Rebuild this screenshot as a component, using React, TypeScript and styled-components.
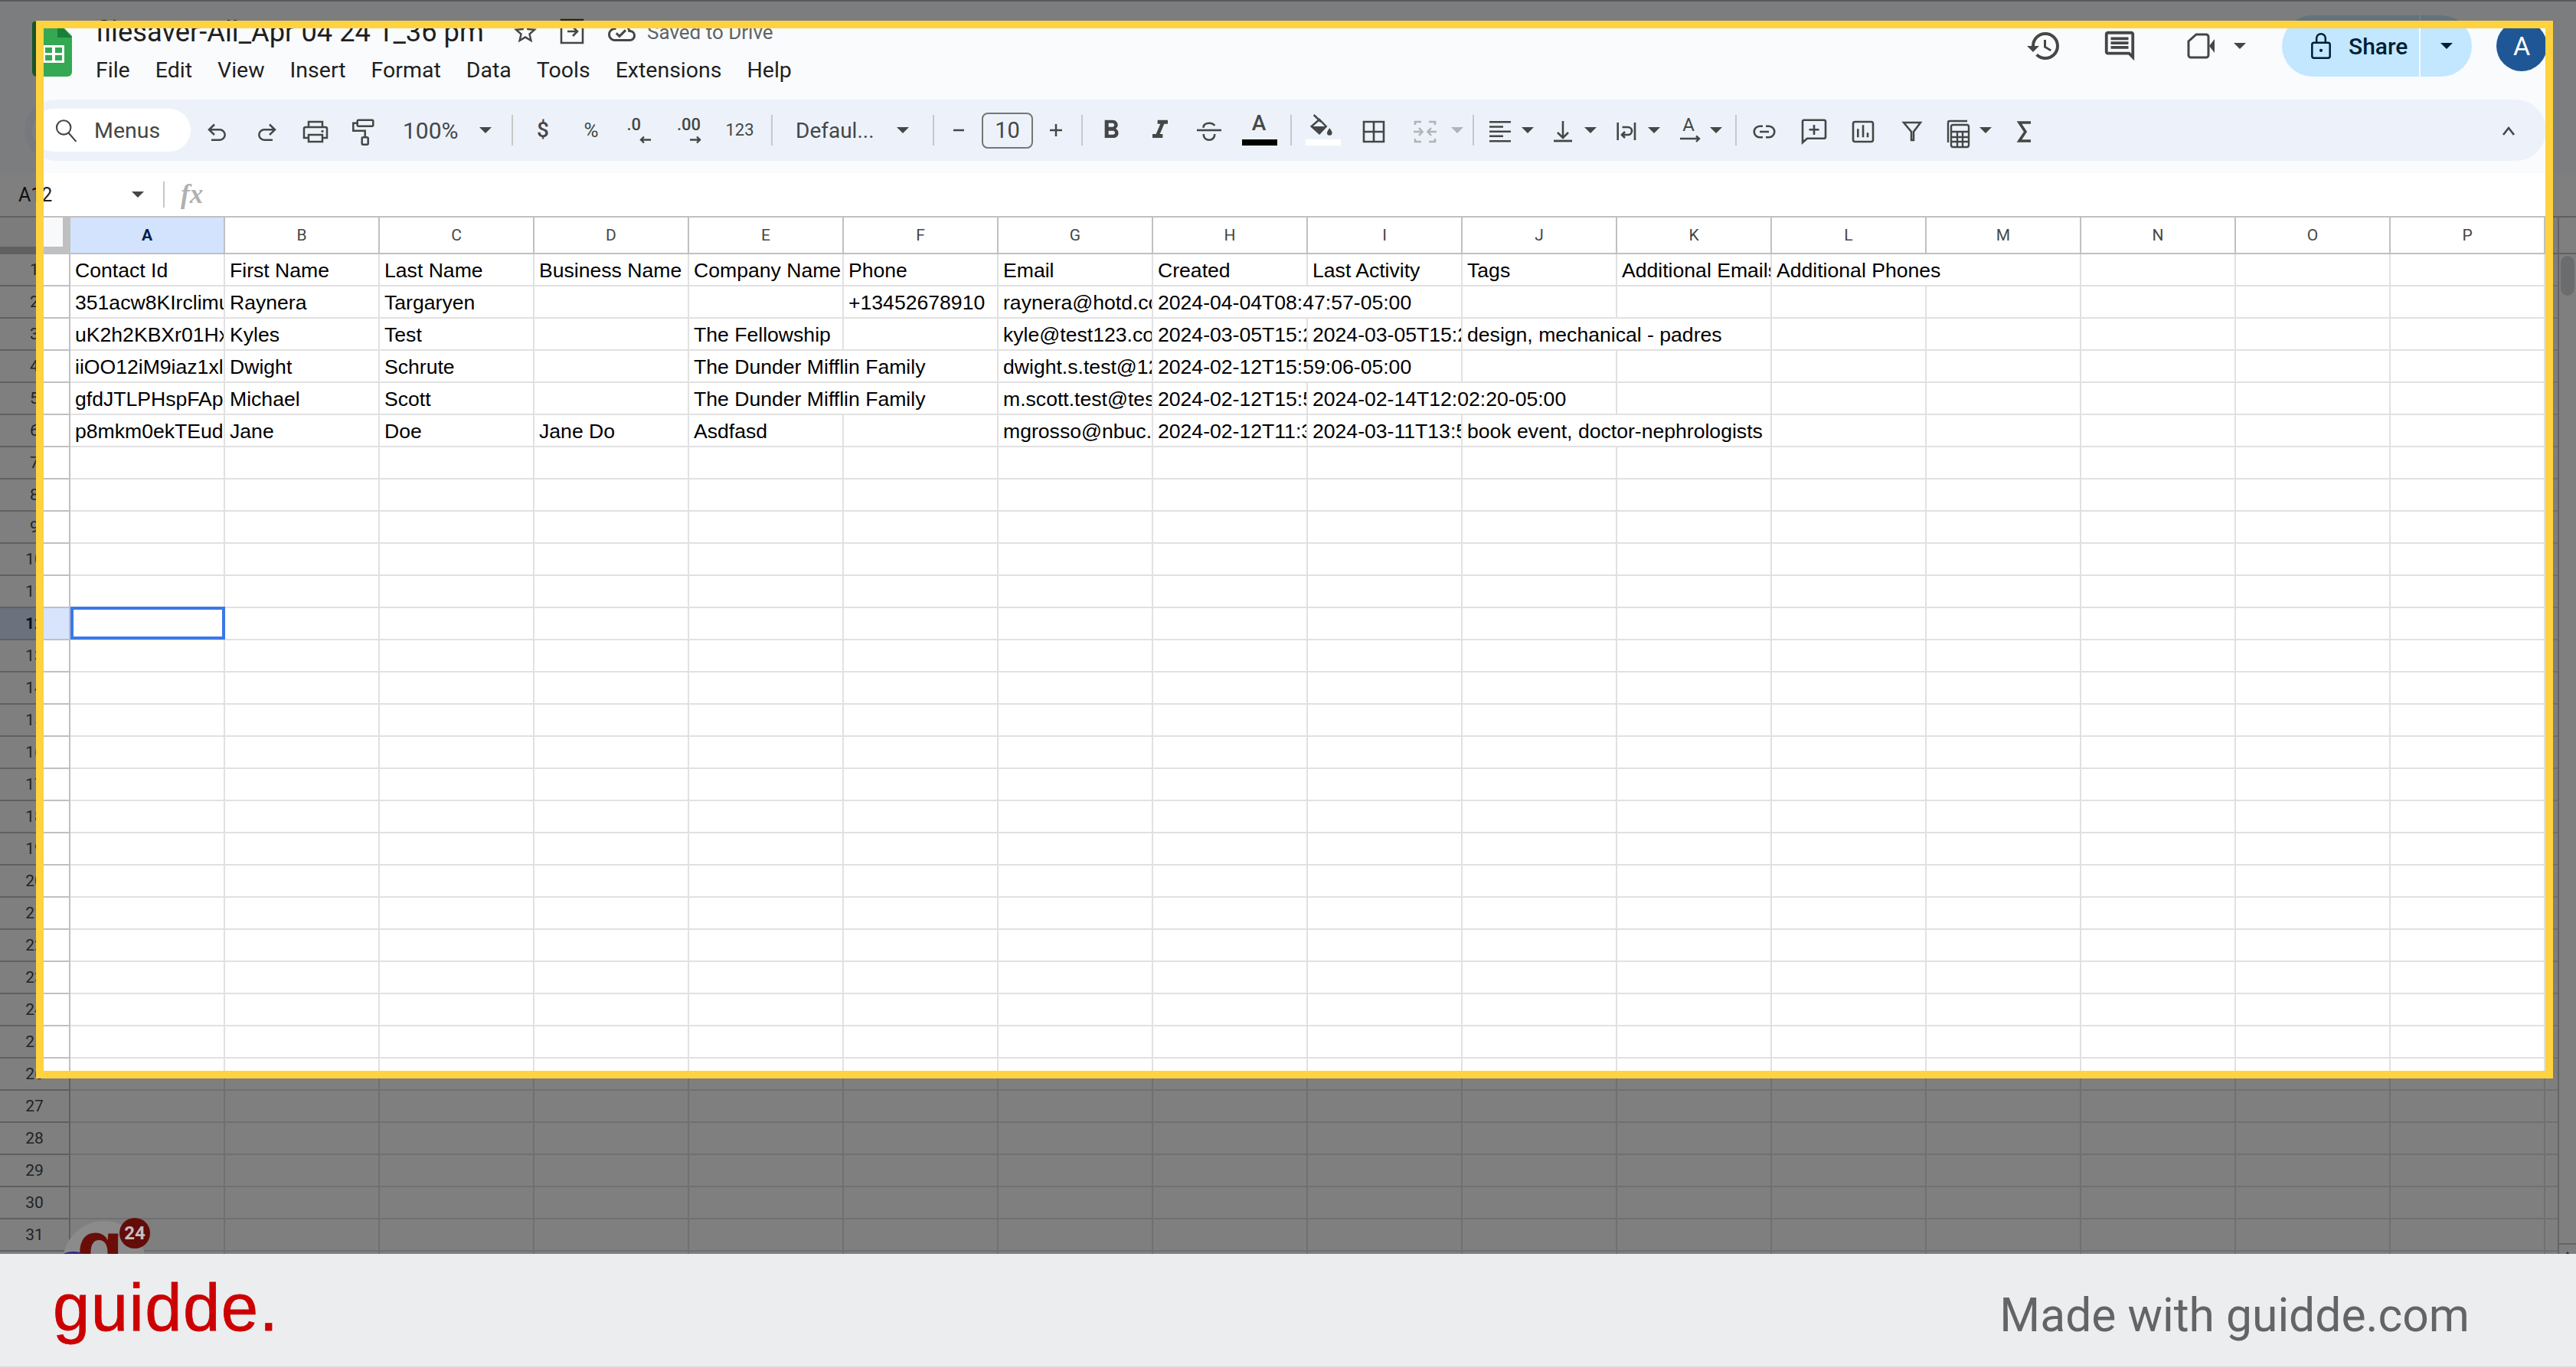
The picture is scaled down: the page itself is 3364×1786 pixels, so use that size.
import React from "react";
import styled, { createGlobalStyle } from "styled-components";
import { MdFormatBold, MdFormatItalic, MdHistory, MdOutlineComment, MdStarBorder, MdOutlineCloudDone } from "react-icons/md";

const Global = createGlobalStyle`
  html, body { margin: 0; padding: 0; overflow: hidden; background: #fff; }
  * { box-sizing: border-box; }
`;

const INK = "#444746";
const UI = `Roboto, "Liberation Sans", sans-serif`;

const Page = styled.div`
  position: relative;
  width: 3364px;
  height: 1786px;
  overflow: hidden;
  font-family: ${UI};
`;
const Sheet = styled.div`
  position: relative;
  height: 1637px;
  overflow: hidden;
  background: #fff;
  display: flex;
  flex-direction: column;
`;
const Chrome = styled.header`
  height: 226px;
  background: #f9fbfd;
  border-top: 2px solid #b4b4b4;
  flex: none;
`;
const TopBar = styled.div`
  display: flex;
  height: 128px;
  padding: 0 38px 0 42px;
`;
const Logo = styled.svg`
  width: 52px;
  height: 72px;
  margin-top: 26px;
  flex: none;
`;
const TitleColumn = styled.div`
  margin-left: 31px;
  display: flex;
  flex-direction: column;
`;
const TitleRow = styled.div`
  display: flex;
  align-items: center;
  height: 40px;
  margin-top: 20px;
`;
const DocTitle = styled.div`
  font-size: 36.3px;
  line-height: 40px;
  color: #1f1f1f;
  white-space: nowrap;
  width: 543px;
`;
const SavedText = styled.span`
  font-size: 26px;
  color: #5f6368;
  margin-left: 15px;
  white-space: nowrap;
`;
const TitleIcon = styled.span<{ $w: number; $ml?: number }>`
  width: ${(p) => p.$w}px;
  margin-left: ${(p) => p.$ml ?? 0}px;
  height: 40px;
  display: flex;
  align-items: center;
  justify-content: center;
  color: ${INK};
  flex: none;
`;
const MenuRow = styled.nav`
  display: flex;
  gap: 33px;
  margin-top: 9px;
  height: 40px;
  align-items: center;
`;
const MenuItem = styled.span`
  font-size: 28.5px;
  color: #1f1f1f;
`;
const Actions = styled.div`
  margin-left: auto;
  display: flex;
  align-items: center;
  height: 80px;
  margin-top: 18px;
`;
const ActionButton = styled.span<{ $ml?: number }>`
  width: 64px;
  height: 64px;
  margin-left: ${(p) => p.$ml ?? 0}px;
  display: flex;
  align-items: center;
  justify-content: center;
  color: ${INK};
  flex: none;
`;
const CaretWrap = styled.span<{ $ml?: number; $w?: number }>`
  width: ${(p) => p.$w ?? 16}px;
  margin-left: ${(p) => p.$ml ?? 0}px;
  display: flex;
  align-items: center;
  justify-content: center;
  flex: none;
`;
const Caret = styled.i<{ $c?: string }>`
  display: block;
  width: 0;
  height: 0;
  border-left: 8px solid transparent;
  border-right: 8px solid transparent;
  border-top: 8px solid ${(p) => p.$c ?? INK};
`;
const ShareGroup = styled.div`
  width: 248px;
  height: 80px;
  margin-left: 47px;
  border-radius: 40px;
  background: #c2e7ff;
  display: flex;
  flex: none;
  color: #001d35;
`;
const ShareMain = styled.div`
  width: 181px;
  border-right: 2px solid #f9fbfd;
  display: flex;
  align-items: center;
  padding-left: 31px;
  gap: 16px;
  font-size: 30px;
  font-weight: 500;
`;
const ShareDrop = styled.div`
  flex: 1;
  display: flex;
  align-items: center;
  justify-content: center;
`;
const Avatar = styled.div`
  width: 66px;
  height: 66px;
  margin-left: 32px;
  border-radius: 50%;
  background: #1f5796;
  color: #fff;
  font-size: 34px;
  display: flex;
  align-items: center;
  justify-content: center;
  flex: none;
`;
const Toolbar = styled.div`
  height: 80px;
  margin: 0 39px 0 32px;
  padding: 0 17px 0 10px;
  border-radius: 40px;
  background: #edf2fa;
  display: flex;
  align-items: center;
`;
const MenusPill = styled.div`
  width: 207px;
  height: 56px;
  margin-right: 3px;
  border-radius: 28px;
  background: #fff;
  display: flex;
  align-items: center;
  padding-left: 27px;
  gap: 20px;
  font-size: 28.5px;
  color: ${INK};
  flex: none;
`;
const Slot = styled.span<{ $w?: number; $ml?: number }>`
  width: ${(p) => p.$w ?? 64}px;
  margin-left: ${(p) => p.$ml ?? 0}px;
  height: 56px;
  display: flex;
  align-items: center;
  justify-content: center;
  flex: none;
  color: ${INK};
  position: relative;
`;
const Sep = styled.span<{ $l?: number; $r?: number }>`
  width: 2px;
  height: 40px;
  margin: 0 ${(p) => p.$r ?? 0}px 0 ${(p) => p.$l ?? 0}px;
  background: #c7c7c7;
  flex: none;
`;
const DropSlot = styled.span<{ $w: number; $pl: number; $gap: number; $s?: number }>`
  width: ${(p) => p.$w}px;
  padding-left: ${(p) => p.$pl}px;
  gap: ${(p) => p.$gap}px;
  display: flex;
  align-items: center;
  font-size: ${(p) => p.$s ?? 28}px;
  color: ${INK};
  flex: none;
`;
const SymbolText = styled.span<{ $s: number; $wt?: number; $up?: number }>`
  font-size: ${(p) => p.$s}px;
  font-weight: ${(p) => p.$wt ?? 400};
  margin-top: ${(p) => -(p.$up ?? 0)}px;
  line-height: 1;
  color: ${INK};
`;
const Stack = styled.span`
  display: flex;
  flex-direction: column;
  line-height: 1;
  align-items: flex-start;
`;
const Arrowlet = styled.svg<{ $ml: number }>`
  width: 16px;
  height: 11px;
  margin-left: ${(p) => p.$ml}px;
  margin-top: 3px;
  fill: none;
  stroke: ${INK};
  stroke-width: 2.4;
`;
const SizeBox = styled.span`
  width: 67px;
  height: 47px;
  border: 2px solid #747775;
  border-radius: 8px;
  font-size: 29px;
  color: ${INK};
  display: flex;
  align-items: center;
  justify-content: center;
  flex: none;
`;
const ColorBar = styled.i<{ $c: string }>`
  position: absolute;
  left: 10px;
  width: 46px;
  top: 40px;
  height: 8px;
  background: ${(p) => p.$c};
`;
const RaisedLetter = styled.span`
  font-size: 28px;
  line-height: 28px;
  margin-top: -18px;
  color: ${INK};
  font-weight: 500;
`;
const Ico = styled.svg.attrs({ viewBox: "-24 -24 48 48" })<{ $stroke?: string; $sw?: number; $size?: number }>`
  width: ${(p) => p.$size ?? 48}px;
  height: ${(p) => p.$size ?? 48}px;
  fill: none;
  stroke: ${(p) => p.$stroke ?? INK};
  stroke-width: ${(p) => p.$sw ?? 2.5};
  overflow: visible;
  flex: none;
`;
const OverlayIco = styled(Ico)`
  position: absolute;
  left: 4px;
  top: 4px;
`;
const Collapse = styled(Slot)`
  margin-left: auto;
`;
const FormulaBar = styled.div`
  height: 56px;
  flex: none;
  background: #fff;
  display: flex;
  align-items: center;
  padding-left: 24px;
`;
const NameBox = styled.div`
  width: 189px;
  display: flex;
  align-items: center;
  justify-content: space-between;
  padding-right: 25px;
  font-size: 25px;
  color: #1f1f1f;
  flex: none;
`;
const FormulaSep = styled.span`
  width: 2px;
  height: 34px;
  background: #c7c7c7;
  flex: none;
`;
const Fx = styled.span`
  margin-left: 21px;
  font: italic 700 35px "Liberation Serif", serif;
  color: #b0b0b0;
`;
const GridArea = styled.div`
  flex: 1;
  display: flex;
  min-height: 0;
  border-top: 2px solid #c0c0c0;
`;
const Grid = styled.div`
  width: 3340px;
  flex: none;
`;
const Row = styled.div<{ $header?: boolean }>`
  display: grid;
  grid-template-columns: 92px repeat(16, 202px) 16px;
  height: ${(p) => (p.$header ? 48 : 42)}px;
`;
const Corner = styled.div`
  background: #c0c0c0;
`;
const CornerFace = styled.div`
  width: 82px;
  height: 38px;
  background: #f8f9fa;
`;
const ColHead = styled.div<{ $on?: boolean }>`
  border-right: 2px solid #c0c0c0;
  border-bottom: 2px solid #c0c0c0;
  background: ${(p) => (p.$on ? "#d3e3fd" : "#fff")};
  color: ${(p) => (p.$on ? "#041e49" : INK)};
  font-weight: ${(p) => (p.$on ? 700 : 400)};
  font-size: 21px;
  display: flex;
  align-items: center;
  justify-content: center;
`;
const RowHead = styled.div<{ $on?: boolean }>`
  border-right: 2px solid #c0c0c0;
  border-bottom: 2px solid #c0c0c0;
  background: ${(p) => (p.$on ? "#d7e4fb" : "#fff")};
  color: ${(p) => (p.$on ? "#041e49" : INK)};
  font-weight: ${(p) => (p.$on ? 700 : 400)};
  font-size: 21px;
  display: flex;
  align-items: center;
  justify-content: center;
`;
const Cell = styled.div<{ $span?: number; $sel?: boolean }>`
  grid-column: span ${(p) => p.$span ?? 1};
  position: relative;
  border-right: 2px solid #e1e1e1;
  border-bottom: 2px solid #e1e1e1;
  padding-left: 6px;
  font: 26.6px/42px "Liberation Sans", Arial, sans-serif;
  color: #000;
  white-space: nowrap;
  overflow: ${(p) => (p.$sel ? "visible" : "hidden")};
  &::after {
    content: ${(p) => (p.$sel ? '""' : "none")};
    position: absolute;
    left: 0;
    right: -2px;
    top: -2px;
    bottom: -1px;
    border: 4px solid #3b78e7;
  }
`;
const Filler = styled.div`
  border-bottom: 2px solid #e1e1e1;
`;
const FillerHead = styled.div`
  border-bottom: 2px solid #c0c0c0;
`;
const Track = styled.aside`
  flex: 1;
  border-left: 2px solid #c9c9c9;
  display: flex;
  flex-direction: column;
  background: #fff;
`;
const TrackHead = styled.div`
  height: 48px;
  border-bottom: 2px solid #c0c0c0;
  flex: none;
`;
const Thumb = styled.div`
  width: 18px;
  height: 52px;
  margin: 2px 0 0 2px;
  border-radius: 9px;
  background: #d6d8da;
`;
const TrackButton = styled.div`
  margin-top: auto;
  height: 14px;
  border-top: 2px solid #c9c9c9;
  display: flex;
  justify-content: center;
  padding-top: 9px;
  &::before {
    content: "";
    border-left: 4px solid transparent;
    border-right: 4px solid transparent;
    border-bottom: 5px solid #666;
    height: 0;
  }
`;
const Widget = styled.div`
  position: absolute;
  left: 82px;
  top: 1594px;
  width: 108px;
  height: 108px;
  border-radius: 50%;
  background: #8b8b8b;
  z-index: 3;
`;
const WidgetLetter = styled.span`
  position: absolute;
  left: 18px;
  top: -15px;
  font: 700 100px/100px "Liberation Sans", sans-serif;
  color: #6a0d08;
`;
const WidgetDot = styled.i`
  position: absolute;
  left: -5px;
  top: 40px;
  width: 38px;
  height: 20px;
  border-radius: 50%;
  background: #2a2a86;
`;
const Badge = styled.span`
  position: absolute;
  left: 74px;
  top: -4px;
  width: 40px;
  height: 40px;
  border-radius: 50%;
  background: #640c08;
  color: #c4c0c0;
  font: 700 24px/40px Roboto, sans-serif;
  text-align: center;
`;
const Spotlight = styled.div`
  position: absolute;
  left: 47px;
  top: 27px;
  width: 3287px;
  height: 1381px;
  border: 10px solid #ffd23f;
  box-shadow: 0 0 0 4000px rgba(0, 0, 0, 0.5);
  z-index: 2;
  pointer-events: none;
`;
const Footer = styled.footer`
  position: relative;
  z-index: 4;
  height: 149px;
  background: #ecedef;
  border-bottom: 2px solid #d9d9db;
  display: flex;
  justify-content: space-between;
  padding: 0 139px 0 69px;
`;
const Brand = styled.span`
  font: 87px/1 "Liberation Sans", Arial, sans-serif;
  letter-spacing: 1.4px;
  -webkit-text-stroke: 0.8px #cc0000;
  color: #cc0000;
  margin-top: 26px;
`;
const MadeWith = styled.span`
  font: 60.6px/1 Roboto, sans-serif;
  color: #636467;
  margin-top: 51px;
`;

const Dd = () => <Caret />;

const LETTERS = "ABCDEFGHIJKLMNOP".split("");
type C = { t?: string; s?: number };
const c = (t?: string, s?: number): C => ({ t, s });
const DATA: C[][] = [
  [c("Contact Id"), c("First Name"), c("Last Name"), c("Business Name"), c("Company Name"), c("Phone"), c("Email"), c("Created"), c("Last Activity"), c("Tags"), c("Additional Emails"), c("Additional Phones", 2)],
  [c("351acw8KIrclimuQ"), c("Raynera"), c("Targaryen"), c(), c(), c("+13452678910"), c("raynera@hotd.com"), c("2024-04-04T08:47:57-05:00", 2)],
  [c("uK2h2KBXr01HxQ"), c("Kyles"), c("Test"), c(), c("The Fellowship"), c(), c("kyle@test123.com"), c("2024-03-05T15:23:11-05:00"), c("2024-03-05T15:23:11-05:00"), c("design, mechanical - padres", 2)],
  [c("iiOO12iM9iaz1xlQ"), c("Dwight"), c("Schrute"), c(), c("The Dunder Mifflin Family", 2), c("dwight.s.test@123.com"), c("2024-02-12T15:59:06-05:00", 2)],
  [c("gfdJTLPHspFApQ"), c("Michael"), c("Scott"), c(), c("The Dunder Mifflin Family", 2), c("m.scott.test@test.com"), c("2024-02-12T15:59:06-05:00"), c("2024-02-14T12:02:20-05:00", 2)],
  [c("p8mkm0ekTEudQ"), c("Jane"), c("Doe"), c("Jane Do"), c("Asdfasd"), c(), c("mgrosso@nbuc.com"), c("2024-02-12T11:30:41-05:00"), c("2024-03-11T13:50:22-05:00"), c("book event, doctor-nephrologists", 2)],
];

function Cells({ row, index }: { row: C[]; index: number }) {
  const used = row.reduce((n, x) => n + (x.s ?? 1), 0);
  const blanks = Array.from({ length: 16 - used }, (_, i) => i);
  return (
    <>
      {row.map((x, i) => (
        <Cell key={i} $span={x.s}>{x.t}</Cell>
      ))}
      {blanks.map((i) => (
        <Cell key={`b${i}`} $sel={index === 11 && i === 0 && used === 0} />
      ))}
    </>
  );
}

export default function App() {
  const rows = Array.from({ length: 32 }, (_, i) => DATA[i] ?? []);
  return (
    <Page>
      <Global />
      <Sheet>
        <Chrome>
          <TopBar>
            <Logo viewBox="0 0 52 72">
              <path d="M4 0H33L52 19V66a6 6 0 0 1-6 6H6a6 6 0 0 1-6-6V4a4 4 0 0 1 4-4z" fill="#34a853" />
              <path d="M33 0L52 21H33z" fill="#188038" />
              <path d="M14 31H42V54H14zM17 34V41H26V34zM30 34V41H39V34zM17 44V51H26V44zM30 44V51H39V44z" fill="#fff" fillRule="evenodd" />
            </Logo>
            <TitleColumn>
              <TitleRow>
                <DocTitle>filesaver-All_Apr 04 24 1_36 pm</DocTitle>
                <TitleIcon $w={36}><MdStarBorder size={38} /></TitleIcon>
                <TitleIcon $w={28} $ml={29}>
                  <Ico $size={48} $sw={2.6}>
                    <path d="M-14 -16H14V14H-14zM-6 -1H6M1 -7L7 -1L1 5" />
                  </Ico>
                </TitleIcon>
                <TitleIcon $w={36} $ml={33}><MdOutlineCloudDone size={40} /></TitleIcon>
                <SavedText>Saved to Drive</SavedText>
              </TitleRow>
              <MenuRow>
                {["File", "Edit", "View", "Insert", "Format", "Data", "Tools", "Extensions", "Help"].map((m) => (
                  <MenuItem key={m}>{m}</MenuItem>
                ))}
              </MenuRow>
            </TitleColumn>
            <Actions>
              <ActionButton><MdHistory size={48} /></ActionButton>
              <ActionButton $ml={35}><MdOutlineComment size={46} /></ActionButton>
              <ActionButton $ml={45}>
                <Ico $sw={3}>
                  <path d="M-9 -15H4A3 3 0 0 1 7 -12V12A3 3 0 0 1 4 15H-16A3 3 0 0 1 -19 12V-6Z" />
                  <path d="M8 0L15 -9V9Z" fill={INK} stroke="none" />
                </Ico>
              </ActionButton>
              <CaretWrap $ml={8}><Dd /></CaretWrap>
              <ShareGroup>
                <ShareMain>
                  <Ico $stroke="#001d35" $sw={3} $size={40}>
                    <rect x="-14" y="-5" width="28" height="24" rx="3" />
                    <path d="M-7 -5V-12A7 7 0 0 1 7 -12V-5" />
                    <circle cx="0" cy="7" r="2.5" fill="#001d35" stroke="none" />
                  </Ico>
                  Share
                </ShareMain>
                <ShareDrop><Caret $c="#001d35" /></ShareDrop>
              </ShareGroup>
              <Avatar>A</Avatar>
            </Actions>
          </TopBar>
          <Toolbar>
            <MenusPill>
              <Ico $size={34} $sw={3}>
                <circle cx="-4" cy="-5" r="13" />
                <path d="M5 5L19 21" />
              </Ico>
              Menus
            </MenusPill>
            <Slot><Ico><path d="M-4 -7.5L-11 -0.7L-4 6M-11 -0.7H3A6.7 6.7 0 0 1 3 12.7H-8" /></Ico></Slot>
            <Slot><Ico><path d="M4 -7.5L11 -0.7L4 6M11 -0.7H-3A6.7 6.7 0 0 0 -3 12.7H8" /></Ico></Slot>
            <Slot>
              <Ico>
                <path d="M-9 -4V-11H9V-4M-9 10H-15V-2A2 2 0 0 1 -13 -4H13A2 2 0 0 1 15 -2V10H9" />
                <rect x="-9" y="6" width="18" height="9" />
                <circle cx="9" cy="1.3" r="1.6" fill={INK} stroke="none" />
              </Ico>
            </Slot>
            <Slot>
              <Ico>
                <rect x="-9.3" y="-13.3" width="20.6" height="8" rx="1.5" />
                <path d="M-9.3 -9.3H-14.7V0.7H0.7V9.3" />
                <rect x="-3.3" y="9.3" width="8" height="9.4" rx="1.5" />
              </Ico>
            </Slot>
            <DropSlot $w={160} $pl={18} $gap={27} $s={30}>100%<Dd /></DropSlot>
            <Sep $r={7} />
            <Slot><SymbolText $s={28} $wt={500}>$</SymbolText></Slot>
            <Slot $w={62}><SymbolText $s={26}>%</SymbolText></Slot>
            <Slot $w={63}>
              <Stack>
                <SymbolText $s={22} $wt={500}>.0</SymbolText>
                <Arrowlet viewBox="0 0 16 11" $ml={16}><path d="M15 5.5H2M6 1.5L2 5.5L6 9.5" /></Arrowlet>
              </Stack>
            </Slot>
            <Slot $w={68}>
              <Stack>
                <SymbolText $s={22} $wt={500}>.00</SymbolText>
                <Arrowlet viewBox="0 0 16 11" $ml={16}><path d="M1 5.5H14M10 1.5L14 5.5L10 9.5" /></Arrowlet>
              </Stack>
            </Slot>
            <Slot><SymbolText $s={22}>123</SymbolText></Slot>
            <Sep $l={9} />
            <DropSlot $w={209} $pl={30} $gap={29}>Defaul...<Dd /></DropSlot>
            <Sep />
            <Slot $w={60} $ml={2}><Ico><path d="M-7 0H7" /></Ico></Slot>
            <SizeBox>10</SizeBox>
            <Slot $w={60}><Ico><path d="M-8 0H8M0 -8V8" /></Ico></Slot>
            <Sep $l={3} />
            <Slot $ml={5}><MdFormatBold size={40} /></Slot>
            <Slot><MdFormatItalic size={40} /></Slot>
            <Slot>
              <Ico $sw={2.6}>
                <path d="M-16 0H16" />
                <path d="M-7.3 -3.3C-8 -7 -4 -9.3 0 -9.3C3 -9.3 6 -8 7.3 -6M-7.3 5C-7.3 10 -4 12.7 0 12.7C4 12.7 7.3 10 7.3 5" />
              </Ico>
            </Slot>
            <Slot $ml={1}>
              <RaisedLetter>A</RaisedLetter>
              <ColorBar $c="#000" />
            </Slot>
            <Sep $l={9} />
            <Slot $ml={8}>
              <Ico>
                <path d="M-11.3 -20L-2 -11" />
                <path d="M-4 -14L4.7 -5L-4 4.3L-14.3 -5Z" />
                <path d="M4.7 -5L-4 4.3L-14.3 -5Z" fill={INK} stroke="none" />
                <path d="M9.3 -2.7C7 0.5 6 2 6 3.5A3.3 3.3 0 0 0 12.6 3.5C12.6 2 11.6 0.5 9.3 -2.7Z" fill={INK} stroke="none" />
              </Ico>
              <ColorBar $c="#fff" />
            </Slot>
            <Slot $ml={3}>
              <Ico $sw={2.6}><path d="M-13 -11H13V15H-13ZM0 -11V15M-13 2H13" /></Ico>
            </Slot>
            <Slot $ml={3}>
              <Ico $stroke="#b1b3b6" $sw={2.6}>
                <path d="M-13 -7V-11H-5M-13 11V15H-5M13 -7V-11H5M13 11V15H5" />
                <path d="M-15 2H-4M-8 -3L-3.5 2L-8 7M15 2H4M8 -3L3.5 2L8 7" />
              </Ico>
            </Slot>
            <CaretWrap $w={20}><Caret $c="#b1b3b6" /></CaretWrap>
            <Sep $l={10} />
            <Slot $w={56} $ml={6}>
              <Ico $sw={2.6}><path d="M-14 -10.7H14M-14 -4.5H4M-14 1.7H14M-14 7.7H4M-14 14.3H14" /></Ico>
            </Slot>
            <CaretWrap><Dd /></CaretWrap>
            <Slot $w={56} $ml={10}>
              <Ico $sw={2.6}><path d="M0 -12V10M-7 3L0 10L7 3" /><path d="M-12 14H12" strokeWidth={2.8} /></Ico>
            </Slot>
            <CaretWrap><Dd /></CaretWrap>
            <Slot $w={56} $ml={11}>
              <Ico $sw={2.6}>
                <path d="M-11.3 -10V13M11 -10V13" />
                <path d="M-5.5 -4H2A5 5 0 0 1 2 6H-5M-2 2L-6 6L-2 10" />
              </Ico>
            </Slot>
            <CaretWrap><Dd /></CaretWrap>
            <Slot $w={56} $ml={9}>
              <SymbolText $s={24} $up={14}>A</SymbolText>
              <OverlayIco $sw={2.4}><path d="M-11 11H13M10 7.3L14 11L10 15" /></OverlayIco>
            </Slot>
            <CaretWrap><Dd /></CaretWrap>
            <Sep $l={17} />
            <Slot $ml={4}>
              <Ico $sw={2.6}><path d="M-2 -5.3H-6A7.3 7.3 0 0 0 -6 9.3H-2M2 -5.3H6A7.3 7.3 0 0 1 6 9.3H2M-6 2H6" /></Ico>
            </Slot>
            <Slot $ml={1}>
              <Ico $sw={2.6}><path d="M-15 -11.5A2 2 0 0 1 -13 -13.3H13A2 2 0 0 1 15 -11.5V9A2 2 0 0 1 13 10.7H-9L-15 16ZM0 -7V6M-6.5 -0.7H6.5" /></Ico>
            </Slot>
            <Slot>
              <Ico $sw={2.6}>
                <rect x="-13" y="-11" width="26" height="26" rx="2.5" />
                <path d="M-6.7 -1.7V9.3M0 -6.7V9.3M6 3.3V9.3" />
              </Ico>
            </Slot>
            <Slot><Ico><path d="M-11 -10H11L2 2V13H-1V2Z" /></Ico></Slot>
            <Slot $w={56}>
              <Ico $sw={2.4}>
                <rect x="-9" y="-7" width="23" height="29" rx="2.5" />
                <path d="M-13 16V-10A2 2 0 0 1 -11 -12H12M-9 2H14M-1 2V22M6 2V22M-9 9H14M-9 15H14" />
              </Ico>
            </Slot>
            <CaretWrap><Dd /></CaretWrap>
            <Slot $ml={11}><Ico $sw={3.6}><path d="M8 -10H-7L1 2L-7 14H8" /></Ico></Slot>
            <Collapse><Ico $sw={2.6}><path d="M-7 6L0 -3L7 6" /></Ico></Collapse>
          </Toolbar>
        </Chrome>
        <FormulaBar>
          <NameBox>A12<Dd /></NameBox>
          <FormulaSep />
          <Fx>fx</Fx>
        </FormulaBar>
        <GridArea>
          <Grid>
            <Row $header>
              <Corner><CornerFace /></Corner>
              {LETTERS.map((l) => (
                <ColHead key={l} $on={l === "A"}>{l}</ColHead>
              ))}
              <FillerHead />
            </Row>
            {rows.map((row, i) => (
              <Row key={i}>
                <RowHead $on={i === 11}>{i + 1}</RowHead>
                <Cells row={row} index={i} />
                <Filler />
              </Row>
            ))}
          </Grid>
          <Track>
            <TrackHead />
            <Thumb />
            <TrackButton />
          </Track>
        </GridArea>
        <Widget>
          <WidgetLetter>g</WidgetLetter>
          <WidgetDot />
          <Badge>24</Badge>
        </Widget>
      </Sheet>
      <Spotlight />
      <Footer>
        <Brand>guidde.</Brand>
        <MadeWith>Made with guidde.com</MadeWith>
      </Footer>
    </Page>
  );
}
